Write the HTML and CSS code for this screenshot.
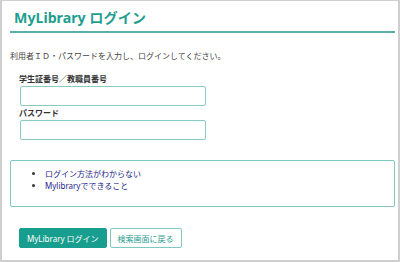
FILE: index.html
```html
<!DOCTYPE html>
<html lang="ja">
<head>
    <meta charset="UTF-8">
    <meta name="viewport" content="width=device-width, initial-scale=1.0">
    <title>MyLibrary ログイン</title>
    <link rel="stylesheet" href="styles.css">
</head>
<body>
    <div class="page">
        <h1>MyLibrary ログイン</h1>

        <p class="lead">利用者ＩＤ・パスワードを入力し、ログインしてください。</p>

        <form class="login-form" onsubmit="return false;">
            <label for="userId">学生証番号／教職員番号</label>
            <input type="text" id="userId">
            <label for="password">パスワード</label>
            <input type="password" id="password">
        </form>

        <div class="help">
            <ul>
                <li><a href="#">ログイン方法がわからない</a></li>
                <li><a href="#">Mylibraryでできること</a></li>
            </ul>
        </div>

        <div class="actions">
            <button class="btn-primary">MyLibrary ログイン</button>
            <button class="btn-outline">検索画面に戻る</button>
        </div>
    </div>
</body>
</html>
```

FILE: styles.css
```css
html, body {
    margin: 0;
    padding: 0;
    background-color: #fff;
}
body {
    font-family: "Noto Sans", "Noto Sans CJK JP", sans-serif;
    color: #333;
}
.page {
    box-sizing: border-box;
    width: 400px;
    height: 262px;
    border: 2px solid #cfcfcf;
    border-top-width: 1px;
    padding: 0 3px 0 8px;
}
h1 {
    margin: 0;
    padding: 8px 0 0 4px;
    height: 22px;
    font-size: 14.2px;
    font-weight: bold;
    color: #1f9e8f;
    border-bottom: 2px solid #5aaea8;
    line-height: 18px;
}
.lead {
    margin: 17px 0 0 0;
    font-size: 8px;
    line-height: 12px;
    color: #444;
}
.login-form {
    display: flex;
    flex-direction: column;
    align-items: flex-start;
    padding-left: 9px;
    margin-top: 12px;
}
.login-form label {
    font-size: 8px;
    font-weight: bold;
    line-height: 10px;
}
.login-form input {
    box-sizing: border-box;
    width: 186px;
    height: 20px;
    margin: 2px 0 2px 1px;
    border: 1px solid #86cbc6;
    border-radius: 2px;
    font-size: 9px;
}
.help {
    margin-top: 18px;
    height: 47px;
    box-sizing: border-box;
    border: 1px solid #7ec8c2;
    border-radius: 2px;
}
.help ul {
    margin: 0;
    padding: 7px 0 0 34px;
    font-size: 8px;
    line-height: 12px;
}
.help a {
    color: #1d1d8a;
    text-decoration: none;
}
.actions {
    display: flex;
    gap: 3px;
    margin-top: 21px;
    padding-left: 9px;
}
.actions button {
    height: 20px;
    padding: 0 7px;
    font-family: inherit;
    font-size: 8px;
    border-radius: 2px;
}
.btn-primary {
    background-color: #179e8e;
    border: 1px solid #179e8e;
    color: #fff;
}
.btn-outline {
    background-color: #fff;
    border: 1px solid #7ec8c2;
    color: #1f9e8f;
}
```
